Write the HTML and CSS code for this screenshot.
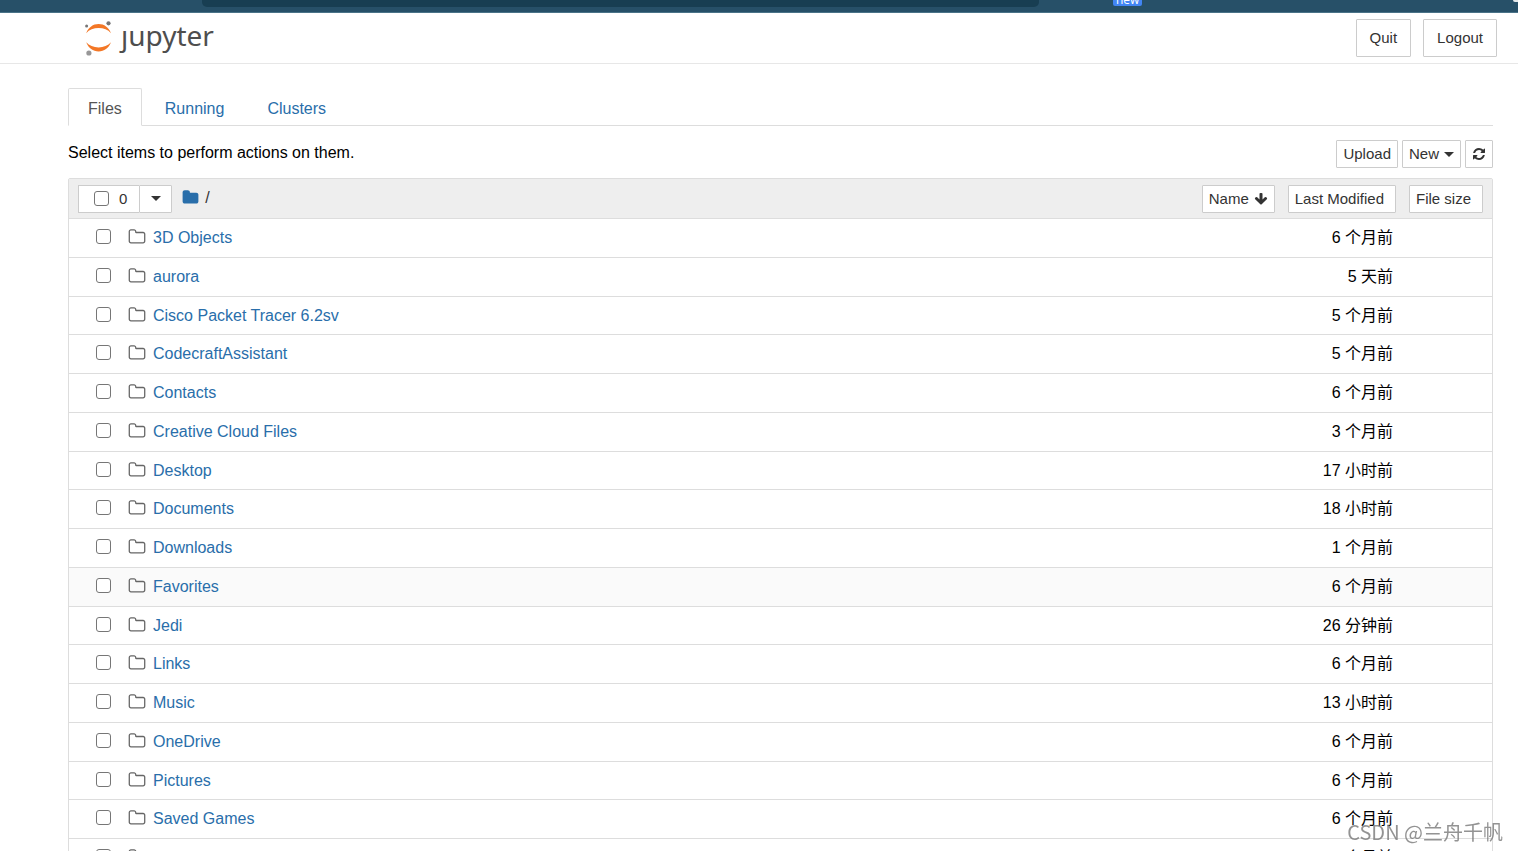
FILE: index.html
```html
<!DOCTYPE html>
<html lang="zh-CN">
<head>
<meta charset="utf-8">
<title>Home Page - Select or create a notebook</title>
<link rel="stylesheet" href="styles.css">
</head>
<body>
<svg class="sprite" aria-hidden="true">
  <symbol id="folder-o" viewBox="0 0 1792 1792"><path d="M1600 1312v-704q0-40-28-68t-68-28h-704q-40 0-68-28t-28-68v-64q0-40-28-68t-68-28h-320q-40 0-68 28t-28 68v960q0 40 28 68t68 28h1216q40 0 68-28t28-68zm128-704v704q0 92-66 158t-158 66h-1216q-92 0-158-66t-66-158v-960q0-92 66-158t158-66h320q92 0 158 66t66 158v32h672q92 0 158 66t66 158z"/></symbol>
  <symbol id="folder" viewBox="0 0 1792 1792"><path d="M1728 608v704q0 92-66 158t-158 66h-1216q-92 0-158-66t-66-158v-960q0-92 66-158t158-66h320q92 0 158 66t66 158v32h672q92 0 158 66t66 158z"/></symbol>
  <symbol id="refresh" viewBox="0 0 1792 1792"><path d="M1639 1056q0 5-1 7-64 268-268 434.500t-478 166.500q-146 0-282.500-55t-243.500-157l-129 129q-19 19-45 19t-45-19-19-45v-448q0-26 19-45t45-19h448q26 0 45 19t19 45-19 45l-137 137q71 66 161 102t187 36q134 0 250-65t186-179q11-17 53-117 8-23 30-23h192q13 0 22.500 9.500t9.500 22.500zm25-800v448q0 26-19 45t-45 19h-448q-26 0-45-19t-19-45 19-45l138-138q-148-137-349-137-134 0-250 65t-186 179q-11 17-53 117-8 23-30 23h-199q-13 0-22.500-9.500t-9.500-22.500v-7q65-268 270-434.500t480-166.500q146 0 284 55.500t245 156.500l130-129q19-19 45-19t45 19 19 45z"/></symbol>
  <symbol id="arrow-down" viewBox="0 0 1792 1792"><path d="M1675 832q0 53-37 90l-651 652q-39 37-91 37-53 0-90-37l-651-652q-38-36-38-90 0-53 38-91l74-75q39-37 91-37 53 0 90 37l294 294v-704q0-52 38-90t90-38h128q52 0 90 38t38 90v704l294-294q37-37 90-37 52 0 91 37l75 75q37 39 37 91z"/></symbol>
</svg>

<div class="browser-bar">
  <div class="address"></div>
  <span class="badge">new</span>
  <span class="avatar"></span>
</div>

<header class="header">
  <a class="logo" href="#" aria-label="jupyter">
    <svg class="logo-mark" viewBox="0 0 30 36" aria-hidden="true">
      <path fill="#f37726" d="M2.200 13.200C4.500 7.300 9 4 14.600 4S24.700 7.300 27 13.200C24 9.700 19.500 8.100 14.600 8.100S5.200 9.700 2.200 13.200zM2.200 22.300C4.500 28.200 9 31.500 14.600 31.500S24.700 28.200 27 22.300C24 25.800 19.500 27.400 14.600 27.400S5.200 25.800 2.200 22.300z"/>
      <circle cx="24.500" cy="3.300" r="2.100" fill="#767677"/>
      <circle cx="2.600" cy="6" r="1.500" fill="#767677"/>
      <circle cx="4.900" cy="33" r="2.600" fill="#989798"/>
    </svg>
    <span class="logo-text">ȷupyter</span>
  </a>
  <div class="header-actions">
    <button class="btn btn-large" type="button">Quit</button>
    <button class="btn btn-large" type="button">Logout</button>
  </div>
</header>

<main class="main">
  <nav class="tabs">
    <a class="tab active" href="#files">Files</a>
    <a class="tab" href="#running">Running</a>
    <a class="tab" href="#clusters">Clusters</a>
  </nav>

  <div class="toolbar">
    <p class="hint">Select items to perform actions on them.</p>
    <div class="toolbar-actions">
      <button class="btn" type="button">Upload</button>
      <button class="btn" type="button">New<span class="caret"></span></button>
      <button class="btn" type="button" aria-label="Refresh"><svg class="icon-small"><use href="#refresh"/></svg></button>
    </div>
  </div>

  <section class="list" id="files">
    <div class="list-header">
      <div class="select-group">
        <label class="select-all"><input class="check" type="checkbox"><span>0</span></label>
        <button class="btn select-menu" type="button" aria-label="Select type"><span class="caret"></span></button>
      </div>
      <div class="breadcrumb"><a href="#" aria-label="Home"><svg class="icon-home"><use href="#folder"/></svg></a><span>/</span></div>
      <div class="sorters">
        <button class="btn" type="button">Name<svg class="icon-small"><use href="#arrow-down"/></svg></button>
        <button class="btn unsorted" type="button">Last Modified</button>
        <button class="btn unsorted" type="button">File size</button>
      </div>
    </div>
    <ul class="rows" id="rows"></ul>
  </section>
</main>
<div class="watermark">CSDN @兰舟千帆</div>
<script src="app.js"></script>
</body>
</html>
```
FILE: app.js
```js
const items = [
  ["3D Objects", "6 个月前"],
  ["aurora", "5 天前"],
  ["Cisco Packet Tracer 6.2sv", "5 个月前"],
  ["CodecraftAssistant", "5 个月前"],
  ["Contacts", "6 个月前"],
  ["Creative Cloud Files", "3 个月前"],
  ["Desktop", "17 小时前"],
  ["Documents", "18 小时前"],
  ["Downloads", "1 个月前"],
  ["Favorites", "6 个月前"],
  ["Jedi", "26 分钟前"],
  ["Links", "6 个月前"],
  ["Music", "13 小时前"],
  ["OneDrive", "6 个月前"],
  ["Pictures", "6 个月前"],
  ["Saved Games", "6 个月前"],
  ["Searches", "6 个月前"]
];

document.getElementById("rows").innerHTML = items.map(([name, modified]) => `
  <li class="row${name === "Favorites" ? " hovered" : ""}">
    <input class="check" type="checkbox" aria-label="${name}">
    <svg class="icon-folder" aria-hidden="true"><use href="#folder-o"/></svg>
    <a class="name" href="#">${name}</a>
    <span class="modified">${modified}</span>
  </li>`).join("");
```
FILE: styles.css
```css
* { box-sizing: border-box; }

body {
  margin: 0;
  height: 100vh;
  overflow: hidden;
  background: #fff;
  color: #000;
  font: 16px/22px "Liberation Sans", Arial, "Noto Sans CJK SC", sans-serif;
}

a { color: #296eaa; text-decoration: none; }
svg { display: block; flex: none; fill: currentColor; }
.sprite { position: absolute; width: 0; height: 0; }

/* Browser strip */
.browser-bar {
  display: flex;
  align-items: flex-start;
  height: 13px;
  padding-left: 202px;
  overflow: hidden;
  background: #275068;
  border-bottom: 1px solid #4a7388;
}
.address {
  flex: 0 1 837px;
  height: 7px;
  border-radius: 0 0 5px 5px;
  background: #183e52;
}
.badge {
  height: 6px;
  margin-left: 74px;
  padding: 0 3px;
  border-radius: 0 0 2px 2px;
  background: #4285f4;
  color: #fff;
  font: 12px/0 "Open Sans", sans-serif;
  overflow: hidden;
}
.avatar {
  width: 5px;
  height: 2px;
  margin-left: auto;
  border-radius: 0 0 0 5px;
  background: #e4e8ea;
}

/* Header */
.header {
  display: flex;
  align-items: center;
  justify-content: space-between;
  height: 51px;
  padding: 0 21px 0 84px;
  border-bottom: 1px solid #e7e7e7;
}
.logo { display: flex; align-items: center; gap: 7px; color: #4e4e4e; }
.logo-mark { width: 30px; height: 36px; }
.logo-text {
  padding-bottom: 6px;
  font: 28px/32px "Noto Sans", "Open Sans", sans-serif;
}
.header-actions { display: flex; gap: 12px; }

.btn {
  display: flex;
  align-items: center;
  justify-content: center;
  gap: 5px;
  height: 28px;
  padding: 0 6px;
  border: 1px solid #ccc;
  border-radius: 1px;
  background: #fff;
  color: #333;
  font: 15px/20px "Liberation Sans", Arial, sans-serif;
  white-space: nowrap;
}
.btn-large { height: 38px; padding: 0 13px; }
.caret {
  border: 5px solid transparent;
  border-top-color: currentColor;
  border-bottom: 0;
}

/* Page body */
.main { padding: 24px 25px 0 68px; }
.tabs {
  display: flex;
  gap: 3px;
  height: 38px;
  border-bottom: 1px solid #ddd;
}
.tab {
  height: 38px;
  padding: 9px 19px 0;
  border: 1px solid transparent;
  border-radius: 2px 2px 0 0;
}
.tab.active {
  border-color: #ddd;
  border-bottom-color: #fff;
  background: #fff;
  color: #555;
}

.toolbar {
  display: flex;
  align-items: flex-start;
  justify-content: space-between;
  padding: 14px 0 10px;
}
.hint { margin: 2px 0 0; }
.toolbar-actions { display: flex; gap: 4px; }

.list { border: 1px solid #ddd; border-radius: 2px; }
.list-header {
  display: flex;
  align-items: center;
  height: 40px;
  padding: 0 9px;
  border-bottom: 1px solid #ddd;
  background: #eee;
}
.select-group { display: flex; }
.select-all {
  display: flex;
  align-items: center;
  gap: 10px;
  height: 28px;
  padding: 0 12px 0 15px;
  border: 1px solid #ccc;
  border-right: 0;
  background: #fff;
  color: #333;
  font-size: 15px;
}
.select-menu { width: 33px; }
.breadcrumb {
  display: flex;
  align-items: center;
  gap: 6px;
  margin-left: 10px;
  padding-bottom: 2px;
  color: #333;
}
.sorters { display: flex; gap: 13px; margin-left: auto; }
.unsorted { padding-right: 11px; }

.icon-small { width: 14px; height: 14px; }
.icon-home { width: 17px; height: 17px; }
.icon-folder { width: 18px; height: 18px; margin: 0 7px 0 17px; color: #666; }

.check {
  flex: none;
  width: 15px;
  height: 15px;
  margin: 0;
  appearance: none;
  border: 1px solid #767676;
  border-radius: 3px;
  background: #fff;
}
.check:checked { background: #296eaa; }

.rows { margin: 0; padding: 0; list-style: none; }
.row {
  display: flex;
  align-items: center;
  height: 39px;
  padding: 0 99px 2px 27px;
  border-bottom: 1px solid #ddd;
}
.row:nth-child(4n + 3) { height: 38px; }
.row .check { margin-bottom: 1px; }
.row.hovered { background: #fafafa; }
.name, .modified { padding-top: 2px; }
.modified { margin-left: auto; }

.watermark {
  position: fixed;
  right: 15px;
  bottom: 4px;
  color: rgba(120, 120, 120, 0.8);
  font: 20px/30px "Noto Sans CJK SC", sans-serif;
}
```
